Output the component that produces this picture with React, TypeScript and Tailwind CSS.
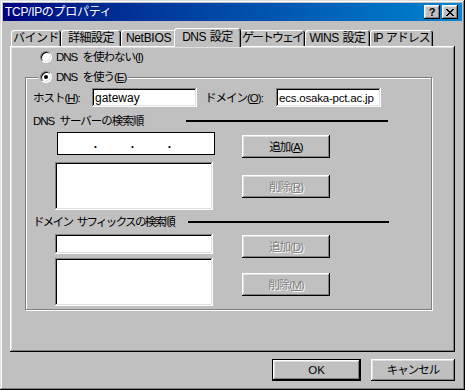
import type { ReactNode } from "react";

const raised =
  "shadow-[inset_-1px_-1px_0_#000,inset_1px_1px_0_#fff,inset_-2px_-2px_0_#808080,inset_2px_2px_0_#dfdfdf]";
const sunken =
  "shadow-[inset_-1px_-1px_0_#fff,inset_1px_1px_0_#808080,inset_-2px_-2px_0_#dfdfdf,inset_2px_2px_0_#000]";

function Button({ children, className = "", disabled = false }: { children: ReactNode; className?: string; disabled?: boolean }) {
  return (
    <div
      className={`flex items-center justify-center bg-[#c0c0c0] ${raised} ${
        disabled ? "text-[#808080] [text-shadow:1px_1px_0_#fff]" : "text-black"
      } ${className}`}
    >
      {children}
    </div>
  );
}

function Radio({ checked }: { checked?: boolean }) {
  return (
    <div className="w-[12px] h-[12px] rounded-full bg-white border border-[#808080] border-r-white border-b-white shadow-[inset_1px_1px_0_#000,inset_-1px_-1px_0_#dfdfdf] flex items-center justify-center shrink-0">
      {checked && <div className="w-[4px] h-[4px] rounded-full bg-black" />}
    </div>
  );
}

const tabs = [
  { label: "バインド", w: "w-[50px]", t: "tracking-[-0.5px]" },
  { label: "詳細設定", w: "w-[60px]", t: "tracking-[-0.5px]" },
  { label: "NetBIOS", w: "w-[55px]", t: "tracking-[-0.3px]" },
  { label: "DNS 設定", w: "w-[67px]", t: "tracking-[-0.5px]", active: true },
  { label: "ゲートウェイ", w: "w-[66px]", t: "tracking-[-2px]" },
  { label: "WINS 設定", w: "w-[65px]", t: "tracking-[-0.5px]" },
  { label: "IP アドレス", w: "w-[63px]", t: "tracking-[-1px]" },
];

export default function App() {
  return (
    <div className="w-[465px] h-[390px] bg-[#c0c0c0] flex flex-col p-[3px] font-['Liberation_Sans','Noto_Sans_CJK_JP',sans-serif] text-[11.5px] leading-[14px] tracking-[-1px] [word-spacing:3px] text-black whitespace-nowrap select-none shadow-[inset_-1px_-1px_0_#000,inset_1px_1px_0_#dfdfdf,inset_-2px_-2px_0_#808080,inset_2px_2px_0_#fff]">
      {/* Title bar */}
      <div className="h-[18px] flex items-center bg-linear-to-r from-[#000080] to-[#1084d0] pl-[2px] pr-[4px]">
        <span className="flex-1 text-white text-[12px] tracking-[-0.3px]">TCP/IPのプロパティ</span>
        <div className={`w-[16px] h-[14px] bg-[#c0c0c0] ${raised} flex items-center justify-center text-[11px] font-bold leading-none tracking-normal`}>?</div>
        <div className={`ml-[2px] w-[16px] h-[14px] bg-[#c0c0c0] ${raised} flex items-center justify-center`}>
          <svg width="8" height="7" viewBox="0 0 8 7" shapeRendering="crispEdges">
            <path d="M0 0h2v1h-2zM6 0h2v1h-2zM1 1h2v1h-2zM5 1h2v1h-2zM2 2h4v1h-4zM3 3h2v1h-2zM2 4h4v1h-4zM1 5h2v1h-2zM5 5h2v1h-2zM0 6h2v1h-2zM6 6h2v1h-2z" fill="#000" />
          </svg>
        </div>
      </div>

      {/* Tabs */}
      <div className="mt-[7px] ml-[8px] h-[18px] flex items-start text-[12px] [word-spacing:1px]">
        {tabs.map((t) =>
          t.active ? (
            <div
              key={t.label}
              className={`relative z-10 -mx-[2px] ${t.w} ${t.t} h-[19px] bg-[#c0c0c0] rounded-t-[3px] shadow-[inset_1px_1px_0_#fff,inset_-1px_0_0_#000,inset_-2px_0_0_#808080] flex items-center justify-center pb-[2px]`}
            >
              {t.label}
            </div>
          ) : (
            <div
              key={t.label}
              className={`mt-[2px] ${t.w} ${t.t} h-[16px] bg-[#c0c0c0] rounded-t-[3px] shadow-[inset_1px_1px_0_#fff,inset_-1px_0_0_#000,inset_-2px_0_0_#808080] flex items-center justify-center`}
            >
              {t.label}
            </div>
          )
        )}
      </div>

      {/* Tab panel */}
      <div className={`ml-[7px] w-[445px] h-[306px] ${raised} flex flex-col`}>
        <div className="mt-[4px] ml-[30px] h-[14px] flex items-center gap-[4px]">
          <Radio />
          <span>
            DNS を使わない(<u>I</u>)
          </span>
        </div>

        {/* Group box */}
        <div className="relative mt-[13px] ml-[15px] w-[407px] h-[233px] border border-[#808080] shadow-[inset_1px_1px_0_#fff,1px_1px_0_#fff] flex flex-col">
          <div className="absolute left-[12px] -top-[8px] h-[14px] px-[2px] bg-[#c0c0c0] flex items-center gap-[4px]">
            <Radio checked />
            <span>
              DNS を使う(<u>E</u>)
            </span>
          </div>

          <div className="mt-[10px] flex items-center h-[19px]">
            <span className="ml-[7px] w-[59px]">
              ホスト(<u>H</u>):
            </span>
            <div className={`w-[105px] h-[19px] bg-white ${sunken} flex items-center pl-[3px] text-[12px] tracking-normal overflow-hidden`}>gateway</div>
            <span className="ml-[8px] w-[71px]">
              ドメイン(<u>O</u>):
            </span>
            <div className={`w-[105px] h-[19px] bg-white ${sunken} flex items-center pl-[3px] text-[11.5px] tracking-[-0.2px] overflow-hidden`}>ecs.osaka-pct.ac.jp</div>
          </div>

          <div className="mt-[7px] h-[14px] flex items-center">
            <span className="ml-[7px] w-[153px]">DNS サーバーの検索順</span>
            <div className="w-[202px] h-[2px] bg-black" />
          </div>

          <div className="mt-[4px] flex">
            <div className="ml-[29px] w-[160px] flex flex-col">
              <div className="ml-[2px] w-[158px] h-[23px] bg-white border border-black flex items-center pl-[35px] gap-[32px] font-bold text-[12px] tracking-normal">
                <span className="w-[5px] text-center">.</span>
                <span className="w-[5px] text-center">.</span>
                <span className="w-[5px] text-center">.</span>
              </div>
              <div className={`mt-[7px] w-[158px] h-[48px] bg-white ${sunken}`} />
            </div>
            <div className="ml-[27px] flex flex-col">
              <Button className="mt-[3px] w-[88px] h-[23px]">
                追加(<u>A</u>)
              </Button>
              <Button disabled className="mt-[17px] w-[88px] h-[23px]">
                削除(<u>R</u>)
              </Button>
            </div>
          </div>

          <div className="mt-[5px] h-[14px] flex items-center">
            <span className="ml-[7px] w-[155px] tracking-[-1.7px]">ドメイン サフィックスの検索順</span>
            <div className="w-[201px] h-[2px] bg-black" />
          </div>

          <div className="mt-[5px] flex">
            <div className="ml-[29px] w-[158px] flex flex-col">
              <div className={`w-[158px] h-[20px] bg-white ${sunken}`} />
              <div className={`mt-[4px] w-[158px] h-[48px] bg-white ${sunken}`} />
            </div>
            <div className="ml-[29px] flex flex-col">
              <Button disabled className="mt-[1px] w-[88px] h-[23px]">
                追加(<u>D</u>)
              </Button>
              <Button disabled className="mt-[15px] w-[88px] h-[23px]">
                削除(<u>M</u>)
              </Button>
            </div>
          </div>
        </div>
      </div>

      {/* Dialog buttons */}
      <div className="mt-[7px] pr-[7px] flex justify-end">
        <div className="w-[89px] h-[22px] border border-black flex">
          <Button className="flex-1 tracking-normal">OK</Button>
        </div>
        <Button className="ml-[10px] w-[84px] h-[22px]">キャンセル</Button>
      </div>
    </div>
  );
}
